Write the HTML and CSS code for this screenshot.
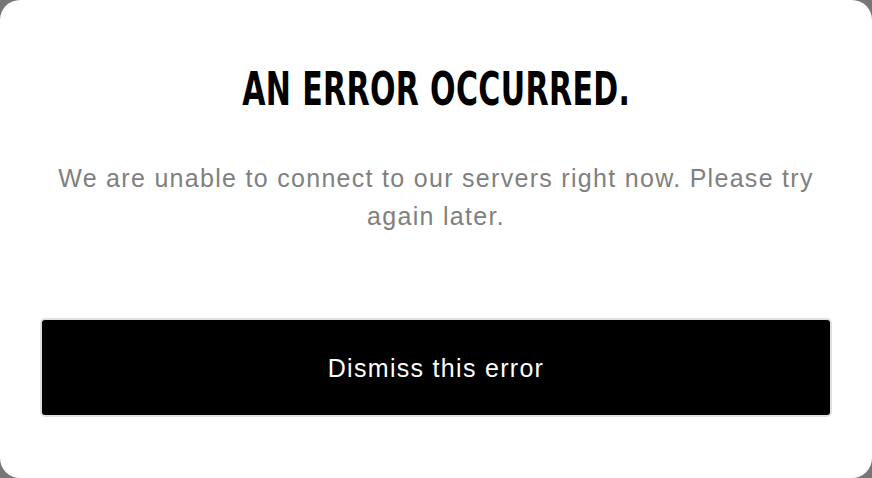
FILE: index.html
```html
<!DOCTYPE html>
<html>
<head>
<meta charset="utf-8">
<link rel="stylesheet" href="styles.css">
</head>
<body>
<div class="modal">
  <h1 class="title"><span class="title-text">AN ERROR OCCURRED.</span></h1>
  <p class="message">We are unable to connect to our servers right now. Please try again later.</p>
  <button class="dismiss">Dismiss this error</button>
</div>
</body>
</html>
```
FILE: styles.css
```css
html, body {
  margin: 0;
  padding: 0;
  background: #767676;
  width: 872px;
  height: 478px;
  overflow: hidden;
}
.modal {
  box-sizing: border-box;
  width: 872px;
  height: 478px;
  background: #fff;
  border-radius: 20px;
  padding: 59px 40px 0;
  display: flex;
  flex-direction: column;
  align-items: stretch;
}
.title {
  margin: 0;
  text-align: center;
  font-family: "DejaVu Sans Condensed", "DejaVu Sans", sans-serif;
  font-weight: bold;
  font-size: 47px;
  line-height: 60px;
  color: #000;
  letter-spacing: 0.5px;
}
.title-text {
  display: inline-block;
  transform: scaleX(0.71);
}
.message {
  margin: 40px 0 0;
  text-align: center;
  font-family: "Liberation Sans", Arial, sans-serif;
  font-size: 25px;
  line-height: 38px;
  letter-spacing: 1.3px;
  color: #808080;
  padding: 0 10px;
}
.dismiss {
  box-sizing: border-box;
  flex: 0 0 auto;
  margin-top: 83px;
  height: 99px;
  background: #000;
  color: #fff;
  border: 2px solid #e0e0e0;
  border-radius: 5px;
  font-family: "Liberation Sans", Arial, sans-serif;
  font-size: 25px;
  letter-spacing: 1.3px;
  padding: 2px 0 0;
}
```
